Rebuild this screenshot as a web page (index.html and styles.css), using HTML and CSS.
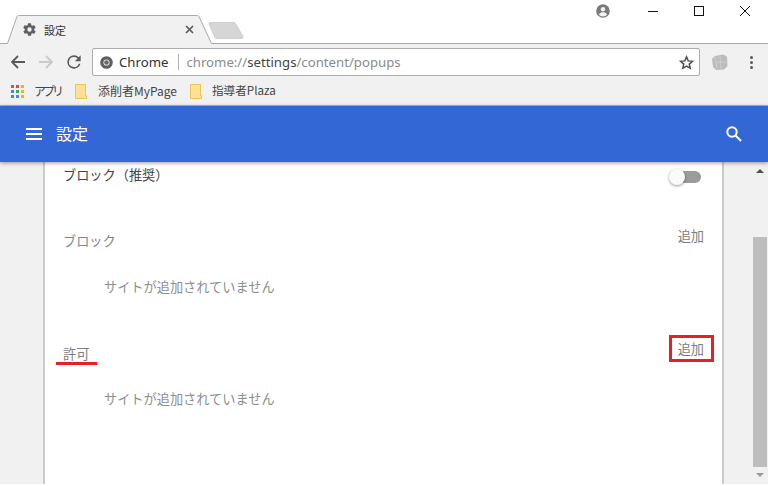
FILE: index.html
```html
<!DOCTYPE html>
<html lang="ja">
<head>
<meta charset="utf-8">
<title>設定</title>
<link rel="stylesheet" href="styles.css">
</head>
<body>
<div class="browser">
  <div class="tabstrip">
    <svg class="tab-shape" width="250" height="44" viewBox="0 0 250 44">
      <path d="M7.500 44 L17.500 15.500 H198.500 L211.500 44 Z" fill="#f1f1f1"/>
      <path d="M7.500 43.500 L17 16.500 Q17.500 15.500 18.500 15.500 H197.500 Q198.500 15.500 199 16.500 L211.500 43.500" fill="none" stroke="#a9a9a9"/>
      <path d="M210 22.500 H234 Q235 22.500 235.500 23.500 L243 36.500 Q243.500 38.500 241 38.500 H217 Q215.500 38.500 215 37.500 L209 24 Q208.800 22.500 210 22.500 Z" fill="#d6d6d6" stroke="#d0d0d0"/>
    </svg>
    <div class="tab">
      <svg class="tab-gear" width="15" height="15" viewBox="0 0 24 24"><path fill="#5f5f5f" d="M19.400 13c.1-.3.1-.7.1-1s0-.7-.1-1l2.100-1.600c.2-.2.2-.4.1-.6l-2-3.500c-.1-.2-.4-.3-.6-.2l-2.500 1c-.5-.4-1.100-.7-1.700-1l-.4-2.600c0-.2-.2-.4-.5-.4h-4c-.2 0-.4.2-.5.4l-.4 2.600c-.6.3-1.200.6-1.700 1l-2.500-1c-.2-.1-.5 0-.6.2l-2 3.500c-.1.2-.1.4.1.6L4.500 11c0 .3-.1.7-.1 1s0 .7.1 1l-2.100 1.600c-.2.2-.2.4-.1.6l2 3.500c.1.2.4.3.6.2l2.500-1c.5.4 1.100.7 1.700 1l.4 2.600c0 .2.200.4.500.4h4c.2 0 .4-.2.500-.4l.4-2.600c.6-.3 1.200-.6 1.700-1l2.500 1c.2.1.5 0 .6-.2l2-3.500c.1-.2.1-.4-.1-.6zM12 15.500a3.500 3.500 0 1 1 0-7 3.500 3.500 0 0 1 0 7z"/></svg>
      <span class="tab-title">設定</span>
      <svg class="tab-close" width="9" height="9" viewBox="0 0 9 9"><path d="M1 1 L8 8 M8 1 L1 8" stroke="#5a5a5a" stroke-width="1.700"/></svg>
    </div>
    <div class="window-controls">
      <svg class="profile" width="14" height="14" viewBox="0 0 14 14"><circle cx="7" cy="7" r="6.800" fill="#7a7a7a"/><circle cx="7" cy="5.200" r="2.200" fill="#f4f4f4"/><path d="M2.800 10.500c1-1.700 2.700-2.200 4.200-2.200s3.200.5 4.200 2.200c-1 1.200-2.500 2-4.200 2s-3.200-.8-4.200-2z" fill="#f4f4f4"/></svg>
      <svg class="win-btn" width="10" height="10" viewBox="0 0 10 10"><path d="M0 5.500 H10" stroke="#111"/></svg>
      <svg class="win-btn" width="10" height="10" viewBox="0 0 10 10"><rect x=".5" y=".5" width="9" height="9" fill="none" stroke="#111"/></svg>
      <svg class="win-btn" width="10" height="10" viewBox="0 0 10 10"><path d="M0 0 L10 10 M10 0 L0 10" stroke="#111"/></svg>
    </div>
  </div>

  <div class="toolbar">
    <svg class="nav" width="16" height="16" viewBox="0 0 16 16"><path d="M15 8 H2 M8 2 L2 8 L8 14" fill="none" stroke="#5a5a5a" stroke-width="1.800"/></svg>
    <svg class="nav" width="16" height="16" viewBox="0 0 16 16"><path d="M1 8 H14 M8 2 L14 8 L8 14" fill="none" stroke="#c9c9c9" stroke-width="1.800"/></svg>
    <svg class="nav nav-reload" width="20" height="20" viewBox="0 0 24 24"><path fill="#5a5a5a" d="M17.650 6.350A7.960 7.960 0 0 0 12 4a8 8 0 1 0 7.730 10h-2.080A6 6 0 1 1 12 6c1.660 0 3.140.69 4.220 1.780L13 11h7V4z"/></svg>
    <div class="omnibox">
      <svg class="chrome-icon" width="13" height="13" viewBox="0 0 13 13"><circle cx="6.500" cy="6.500" r="6.300" fill="#5f5f5f"/><circle cx="6.500" cy="6.500" r="3.100" fill="#f2f2f2"/><circle cx="6.500" cy="6.500" r="2.300" fill="#6a6a6a"/></svg>
      <span class="scheme-label">Chrome</span>
      <span class="divider"></span>
      <span class="url"><span class="url-dim">chrome://</span><span class="url-strong">settings</span><span class="url-dim">/content/popups</span></span>
      <svg class="star" width="15" height="15" viewBox="0 0 24 24"><path fill="none" stroke="#4d4d4d" stroke-width="2.400" d="M12 3 L14.700 9.400 L21.600 10 L16.400 14.500 L18 21.300 L12 17.700 L6 21.300 L7.600 14.500 L2.400 10 L9.300 9.400 Z"/></svg>
    </div>
    <svg class="extension" width="17" height="17" viewBox="0 0 17 17"><path d="M1 5 L4 2 L12 0.500 Q15 1 16 3 L16.500 12 L13 15.500 L5 16 L2 13 Z" fill="#bcbcbc"/><path d="M4 3 L6 14 M9 2 L10 15 M6 8 H15" stroke="#cfcfcf"/></svg>
    <div class="menu-dots"><span></span><span></span><span></span></div>
  </div>

  <div class="bookmarks">
    <svg class="apps" width="13" height="13" viewBox="0 0 13 13">
      <rect x="0" y="0" width="3" height="3" fill="#e8453c"/><rect x="5" y="0" width="3" height="3" fill="#e8453c"/><rect x="10" y="0" width="3" height="3" fill="#f4b400"/>
      <rect x="0" y="5" width="3" height="3" fill="#4285f4"/><rect x="5" y="5" width="3" height="3" fill="#34a853"/><rect x="10" y="5" width="3" height="3" fill="#f4b400"/>
      <rect x="0" y="10" width="3" height="3" fill="#34a853"/><rect x="5" y="10" width="3" height="3" fill="#4285f4"/><rect x="10" y="10" width="3" height="3" fill="#f4b400"/>
    </svg>
    <span class="bm-text bm-apps">アプリ</span>
    <svg class="bm-page" width="12" height="15" viewBox="0 0 12 15"><path d="M.5.500 H10.500 V11.500 H11.500 V14.500 H.5 Z" fill="#fde293" stroke="#eec356"/></svg>
    <span class="bm-text bm-first">添削者MyPage</span>
    <svg class="bm-page" width="12" height="15" viewBox="0 0 12 15"><path d="M.5.500 H10.500 V11.500 H11.500 V14.500 H.5 Z" fill="#fde293" stroke="#eec356"/></svg>
    <span class="bm-text bm-second">指導者Plaza</span>
  </div>

  <header class="appbar">
    <div class="hamburger"><span></span><span></span><span></span></div>
    <h1 class="appbar-title">設定</h1>
    <svg class="search" width="18" height="18" viewBox="0 0 18 18"><circle cx="7" cy="7" r="4.700" fill="none" stroke="#fff" stroke-width="2"/><path d="M10.500 10.500 L16 16" stroke="#fff" stroke-width="2"/></svg>
  </header>

  <main class="content">
    <section class="card">
      <div class="row row-toggle">
        <span class="label-main">ブロック（推奨）</span>
        <span class="toggle"><span class="toggle-track"></span><span class="toggle-knob"></span></span>
      </div>
      <div class="row row-block">
        <span class="label-section">ブロック</span>
        <span class="add add-block">追加</span>
      </div>
      <p class="empty empty-block">サイトが追加されていません</p>
      <div class="row row-allow">
        <span class="label-allow">許可</span>
        <span class="add add-marked">追加</span>
      </div>
      <p class="empty">サイトが追加されていません</p>
    </section>
    <div class="scrollbar">
      <span class="arrow-up"></span>
      <span class="thumb"></span>
      <span class="arrow-down"></span>
    </div>
  </main>
</div>
</body>
</html>
```

FILE: styles.css
```css
* { box-sizing: border-box; }
html, body { margin: 0; padding: 0; }
body {
  width: 768px;
  height: 486px;
  overflow: hidden;
  background: #fff;
  font-family: "Noto Sans CJK JP", "Noto Sans", sans-serif;
}
.browser { display: flex; flex-direction: column; height: 486px; }

/* Tab strip */
.tabstrip {
  position: relative;
  height: 44px;
  flex: none;
  background: #fff;
  border-bottom: 1px solid #a9a9a9;
  display: flex;
  justify-content: flex-end;
}
.tab-shape { position: absolute; left: 0; top: 0; }
.tab {
  position: absolute;
  left: 22px;
  top: 15px;
  width: 172px;
  height: 29px;
  display: flex;
  align-items: center;
}
.tab-gear { flex: none; margin-right: 7px; }
.tab-title { font-size: 11px; color: #333; flex: 1; }
.tab-close { flex: none; }
.window-controls { display: flex; align-items: center; height: 22px; padding-right: 18px; }
.profile { margin-right: 38px; }
.win-btn { margin-left: 36px; }
.profile + .win-btn { margin-left: 0; }

/* Toolbar */
.toolbar {
  height: 34px;
  flex: none;
  background: #f1f1f1;
  display: flex;
  align-items: center;
  padding: 2px 0 0 10px;
}
.nav { flex: none; margin-right: 12px; }
.nav-reload { margin-left: -2px; margin-right: 10px; }
.omnibox {
  width: 608px;
  height: 28px;
  margin-left: -2px;
  flex: none;
  background: #fff;
  border: 1px solid #adadad;
  border-radius: 2px;
  display: flex;
  align-items: center;
  padding: 0 5px 0 7px;
}
.chrome-icon { flex: none; margin-right: 6px; }
.scheme-label { font: 13.200px "Noto Sans", sans-serif; color: #333; }
.divider { width: 1px; height: 16px; background: #adadad; margin: 0 7px 0 10px; }
.url { font: 13.200px "Noto Sans", sans-serif; flex: 1; white-space: nowrap; }
.url-dim { color: #8b8b8b; }
.url-strong { color: #444; }
.star { flex: none; }
.extension { flex: none; margin-left: 11px; }
.menu-dots { display: flex; flex-direction: column; gap: 2px; margin-left: 22px; }
.menu-dots span { width: 3px; height: 3px; background: #5a5a5a; border-radius: 50%; }

/* Bookmarks */
.bookmarks {
  height: 28px;
  flex: none;
  background: #f1f1f1;
  display: flex;
  align-items: center;
  padding: 0 0 1px 11px;
  border-bottom: 1px solid #a9b6cf;
  font-size: 12px;
  color: #444;
}
.apps { flex: none; margin-right: 10px; }
.bm-text { line-height: 1; }
.bm-apps { margin-right: 14px; width: 27px; white-space: nowrap; letter-spacing: -3px; }
.bm-page { flex: none; margin-right: 11px; }
.bm-first { margin-right: 13px; }
.bm-second { margin-left: -1px; font-size: 11.600px; }

/* App bar */
.appbar {
  height: 56px;
  flex: none;
  background: #3367d6;
  display: flex;
  align-items: center;
  padding: 0 26px;
  position: relative;
  box-shadow: 0 1px 4px rgba(0, 0, 0, .4);
  z-index: 2;
}
.hamburger { display: flex; flex-direction: column; gap: 3px; margin-right: 14px; }
.hamburger span { width: 16px; height: 2px; background: #fff; }
.appbar-title { font-size: 16px; font-weight: 400; color: #fff; margin: 0 0 2px; flex: 1; }
.search { flex: none; margin-right: -1px; }

/* Content */
.content {
  flex: 1;
  background: #f1f1f1;
  display: flex;
  position: relative;
  overflow: hidden;
  border-bottom: 2px solid #fff;
}
.card {
  width: 681px;
  margin-left: 43px;
  background: #fff;
  border-left: 2px solid #cbcbcb;
  border-right: 2px solid #cbcbcb;
  padding-left: 18px;
  padding-right: 18px;
  flex: none;
}
.row { display: flex; justify-content: space-between; font-size: 13.200px; line-height: 20px; }
.row-toggle { height: 26px; align-items: center; }
.label-main { color: #444; }
.toggle { position: relative; width: 32px; height: 14px; margin-right: 3px; margin-top: 3px; }
.toggle-track { position: absolute; left: 2px; top: 1px; width: 30px; height: 12px; border-radius: 6px; background: #9b9b9b; }
.toggle-knob {
  position: absolute; left: 0; top: -1px; width: 16px; height: 16px; border-radius: 50%;
  background: #fafafa; box-shadow: 0 1px 3px rgba(0, 0, 0, .4);
}
.row-block { margin-top: 43px; }
.label-section { color: #858585; }
.add { color: #7d7d7d; }
.add-block { position: relative; top: -5px; }
.empty { margin: 0; font-size: 13.200px; line-height: 20px; color: #8e8e8e; padding-left: 41px; }
.empty-block { margin-top: 26px; }
.row-allow { margin-top: 46px; margin-bottom: 25px; align-items: center; }
.label-allow { color: #7d7d7d; position: relative; }
.label-allow::after {
  content: "";
  position: absolute;
  left: -7px;
  top: 18px;
  width: 41px;
  height: 3px;
  background: #ee1c25;
}
.add-marked {
  position: relative;
  top: -5px;
  outline: 3px solid #ee1c25;
  padding: 2px 7px 2px 6px;
  margin-right: -7px;
  line-height: 17px;
}

/* Scrollbar */
.scrollbar { position: relative; flex: 1; margin-left: 28px; }
.thumb { position: absolute; left: 1px; top: 75px; width: 14px; height: 230px; background: #bdbdbd; }
.arrow-up, .arrow-down { position: absolute; left: 4px; width: 0; height: 0; border-left: 4px solid transparent; border-right: 4px solid transparent; }
.arrow-up { top: 7px; border-bottom: 4px solid #505050; }
.arrow-down { top: 311px; border-top: 4px solid #9a9a9a; }
```
